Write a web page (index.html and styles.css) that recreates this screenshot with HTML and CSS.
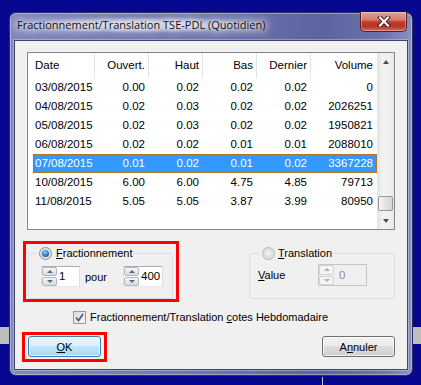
FILE: index.html
```html
<!DOCTYPE html>
<html lang="fr">
<head>
	<meta charset="utf-8" />
	<title>Fractionnement/Translation</title>
	<link rel="stylesheet" href="styles.css">
</head>
<body>
	<div class="desk desk-left"></div>
	<div class="desk desk-right"></div>
	<div class="desk desk-line"></div>

	<div class="window">
		<div class="titlebar">
			<span class="title">Fractionnement/Translation TSE-PDL (Quotidien)</span>
			<button class="close" aria-label="Fermer">
				<svg width="14" height="11" viewBox="0 0 14 11">
					<path d="M3 1.5 L11 9.5 M11 1.5 L3 9.5" stroke="#3a1a1a" stroke-width="4" stroke-linecap="square" />
					<path d="M3 1.5 L11 9.5 M11 1.5 L3 9.5" stroke="#fff" stroke-width="2.2" stroke-linecap="square" />
				</svg>
			</button>
		</div>

		<div class="client">
			<div class="list">
				<div class="list-body">
					<div class="head">
						<span class="left">Date</span>
						<span>Ouvert.</span>
						<span>Haut</span>
						<span>Bas</span>
						<span>Dernier</span>
						<span class="last">Volume</span>
					</div>
					<div class="row"><span class="left">03/08/2015</span><span>0.00</span><span>0.02</span><span>0.02</span><span>0.02</span><span class="last">0</span></div>
					<div class="row"><span class="left">04/08/2015</span><span>0.02</span><span>0.03</span><span>0.02</span><span>0.02</span><span class="last">2026251</span></div>
					<div class="row"><span class="left">05/08/2015</span><span>0.02</span><span>0.03</span><span>0.02</span><span>0.02</span><span class="last">1950821</span></div>
					<div class="row"><span class="left">06/08/2015</span><span>0.02</span><span>0.02</span><span>0.01</span><span>0.01</span><span class="last">2088010</span></div>
					<div class="row selected"><span class="left">07/08/2015</span><span>0.01</span><span>0.02</span><span>0.01</span><span>0.02</span><span class="last">3367228</span></div>
					<div class="row"><span class="left">10/08/2015</span><span>6.00</span><span>6.00</span><span>4.75</span><span>4.85</span><span class="last">79713</span></div>
					<div class="row"><span class="left">11/08/2015</span><span>5.05</span><span>5.05</span><span>3.87</span><span>3.99</span><span class="last">80950</span></div>
				</div>
				<div class="vscroll">
					<div class="arrow-btn"><i class="tri up"></i></div>
					<div class="track"><div class="thumb"></div></div>
					<div class="arrow-btn"><i class="tri down"></i></div>
				</div>
			</div>

			<div class="options">
				<div class="focusbox">
					<fieldset class="group frac">
						<legend><span class="radio on"></span><span><u>F</u>ractionnement</span></legend>
						<div class="fields">
							<div class="spin">
								<span class="spin-btns"><i class="sb"><i class="tri up"></i></i><i class="sb"><i class="tri down"></i></i></span>
								<span class="spin-val">1</span>
							</div>
							<span class="pour">pour</span>
							<div class="spin">
								<span class="spin-btns"><i class="sb"><i class="tri up"></i></i><i class="sb"><i class="tri down"></i></i></span>
								<span class="spin-val">400</span>
							</div>
						</div>
					</fieldset>
				</div>

				<fieldset class="group trans">
					<legend><span class="radio"></span><span><u>T</u>ranslation</span></legend>
					<div class="fields">
						<span class="value-label"><u>V</u>alue</span>
						<div class="spin disabled">
							<span class="spin-btns"><i class="sb"><i class="tri up"></i></i><i class="sb"><i class="tri down"></i></i></span>
							<span class="spin-val">0</span>
						</div>
					</div>
				</fieldset>
			</div>

			<label class="check-row">
				<span class="checkbox">
					<svg width="9" height="9" viewBox="0 0 9 9"><path d="M1 4.5 L3.5 7.5 L8 1" fill="none" stroke="#4a5e98" stroke-width="1.8" /></svg>
				</span>
				<span>Fractionnement/Translation <u>c</u>otes Hebdomadaire</span>
			</label>

			<div class="buttons">
				<div class="focusbox ok-box">
					<button class="btn default"><u>O</u>K</button>
				</div>
				<button class="btn">A<u>n</u>nuler</button>
			</div>
		</div>
	</div>
</body>
</html>
```

FILE: styles.css
```css
html, body { margin: 0; height: 100%; }
body {
	background: #07078f;
	font-family: "Liberation Sans", Arial, sans-serif;
	font-size: 11px;
	color: #000;
	overflow: hidden;
	position: relative;
}

/* bits of the desktop behind the dialog */
.desk { position: absolute; }
.desk-left { left: 0; top: 327px; width: 9px; height: 17px; background: #bdbdbd; }
.desk-right { left: 413px; top: 327px; width: 8px; height: 17px; background: #bdbdbd; }
.desk-line { left: 322px; top: 377px; width: 1px; height: 8px; background: #c8c8d8; }

/* window frame */
.window {
	width: 404px;
	height: 364px;
	margin: 12px 0 0 9px;
	box-sizing: border-box;
	padding: 0 4px 5px;
	border: 1px solid #2c3060;
	border-radius: 7px;
	background: linear-gradient(to right, #8088bc 0%, #7077b0 45%, #5d639f 78%, #6c72aa 92%, #8a90c0 100%);
	box-shadow: inset 0 0 0 1px rgba(255, 255, 255, 0.35);
	display: flex;
	flex-direction: column;
}
.titlebar {
	height: 27px;
	display: flex;
	align-items: flex-start;
}
.title {
	font-family: "Open Sans", "Noto Sans", sans-serif;
	font-size: 11px;
	line-height: 16px;
	margin: 4px 0 0 3px;
	padding: 0 4px 0 0;
	color: #111;
	background: radial-gradient(ellipse at 50% 50%, rgba(255, 255, 255, 0.55) 30%, rgba(255, 255, 255, 0) 72%);
	text-shadow: 0 0 6px #fff, 0 0 8px #fff, 0 0 12px #fff, 0 0 14px #fff;
}
.close {
	margin: -1px 1px 0 auto;
	width: 47px;
	height: 20px;
	padding: 0;
	border: 1px solid #5a2222;
	border-top: 0;
	border-radius: 0 0 5px 5px;
	background: linear-gradient(#e2a397 0%, #d47a6c 42%, #c03d2d 52%, #b93325 75%, #d0705e 100%);
	box-shadow: inset 0 0 0 1px rgba(255, 255, 255, 0.3);
	display: flex;
	align-items: center;
	justify-content: center;
}
.client {
	flex: 1;
	box-sizing: border-box;
	border: 1px solid #3e4474;
	box-shadow: 0 0 0 1px rgba(255, 255, 255, 0.3);
	background: #f0f0f0;
	display: flex;
	flex-direction: column;
}

/* list view */
.list {
	margin: 11px 12px 0;
	height: 178px;
	box-sizing: border-box;
	border: 1px solid #828790;
	background: #fff;
	display: flex;
	font-size: 11.5px;
}
.list-body { width: 349px; }
.head, .row { display: grid; }
.head {
	grid-template-columns: 67px 54px 54px 54px 54px 66px;
	height: 25px;
	line-height: 24px;
}
.head span {
	border-right: 1px solid #e3e3e3;
	text-align: right;
	padding-right: 3px;
}
.head span.left { text-align: left; padding-left: 7px; }
.head span.last { border-right: 0; padding-right: 4px; }
.row {
	grid-template-columns: 62px 54px 54px 54px 54px 66px;
	margin-left: 5px;
	height: 19px;
	line-height: 19px;
}
.row span { text-align: right; padding-right: 4px; }
.row span.left { text-align: left; padding-left: 2px; }
.row span.last { padding-right: 4px; }
.row.selected {
	background: #3399ff;
	color: #fff;
	outline: 1px dotted #b06a10;
	outline-offset: -1px;
}

.vscroll {
	width: 17px;
	display: flex;
	flex-direction: column;
	background: linear-gradient(to right, #e3e3e3, #f3f3f3 35%, #f0f0f0 70%, #e8e8e8);
}
.arrow-btn {
	height: 17px;
	display: flex;
	align-items: center;
	justify-content: center;
}
.track {
	flex: 1;
	display: flex;
	flex-direction: column;
	justify-content: flex-end;
	padding-bottom: 1px;
}
.thumb {
	height: 15px;
	margin: 0 1px;
	box-sizing: border-box;
	border: 1px solid #979797;
	border-radius: 2px;
	background: linear-gradient(to right, #f6f6f6, #e4e4e4 50%, #d6d6d6);
}
.tri {
	display: block;
	width: 0;
	height: 0;
	border-left: 3.5px solid transparent;
	border-right: 3.5px solid transparent;
}
.tri.up { border-bottom: 4px solid #4d4d4d; }
.tri.down { border-top: 4px solid #4d4d4d; }

/* group boxes */
.options {
	display: flex;
	justify-content: space-between;
	align-items: flex-start;
	margin: 11px 12px 0 8px;
}
.focusbox {
	border: 3px solid #ff0000;
}
.options .focusbox { width: 156px; height: 61px; box-sizing: border-box; }
.group {
	margin: 0;
	box-sizing: border-box;
	border: 1px solid #d5dfe5;
	border-radius: 3px;
}
.group legend {
	display: flex;
	align-items: center;
	line-height: 16px;
	height: 16px;
	padding: 0 2px;
}
.frac { width: 145px; height: 54px; margin: 1px 0 0 2px; padding: 0 8px 0 12px; }
.frac legend { margin-left: -4px; }
.trans { width: 146px; height: 54px; margin-top: 4px; padding: 0 8px 0 8px; }
.trans legend { margin-left: 2px; }
.fields {
	display: flex;
	align-items: center;
	margin-top: 5px;
}
.trans .fields { margin-top: 3px; }

.radio {
	width: 13px;
	height: 13px;
	box-sizing: border-box;
	border-radius: 50%;
	border: 1px solid #8e8f8f;
	background: radial-gradient(circle at 50% 50%, #f2f2f2 0, #dcdcdc 60%, #f7f7f7 100%);
	margin-right: 4px;
	display: inline-flex;
	align-items: center;
	justify-content: center;
}
.trans .radio { margin-right: 3px; border-color: #b5b5b5; }
.radio.on::after {
	content: "";
	width: 7px;
	height: 7px;
	border-radius: 50%;
	background: radial-gradient(circle at 45% 35%, #9fdcff 0, #2a8ad6 45%, #0c3f80 100%);
}

.spin {
	display: flex;
	width: 39px;
	height: 21px;
	box-sizing: border-box;
	border: 1px solid #abadb3;
	border-color: #abadb3 #dbdfe6 #e3e9ef #e2e3ea;
	background: #fff;
	font-size: 11.5px;
}
.spin-btns {
	width: 15px;
	display: flex;
	flex-direction: column;
	gap: 1px;
	padding: 0 1px 0 0;
}
.sb {
	flex: 1;
	border: 1px solid #b3b7bd;
	border-radius: 2px;
	background: linear-gradient(#f6f6f6, #dadada);
	display: flex;
	align-items: center;
	justify-content: center;
}
.sb .tri { border-left-width: 3px; border-right-width: 3px; }
.sb .tri.up { border-bottom: 3px solid #56698f; }
.sb .tri.down { border-top: 3px solid #56698f; }
.spin-val { line-height: 19px; padding-left: 1px; }
.pour { margin: 0 16px 0 5px; }
.frac .spin + .pour + .spin { width: 40px; }

.value-label { width: 60px; }
.spin.disabled { width: 49px; height: 22px; background: #f0f0f0; border-color: #c4c6c9; color: #8d8d8d; }
.spin.disabled .sb { border-color: #d0d2d5; background: #f4f4f4; }
.spin.disabled .tri.up { border-bottom-color: #b0b0b0; }
.spin.disabled .tri.down { border-top-color: #b0b0b0; }
.spin.disabled .spin-val { padding-left: 4px; line-height: 20px; }

/* checkbox */
.check-row {
	display: flex;
	align-items: center;
	margin: 8px 0 0 58px;
	height: 14px;
}
.checkbox {
	width: 13px;
	height: 13px;
	box-sizing: border-box;
	border: 1px solid #9a9a9a;
	background: linear-gradient(135deg, #dcdcdc, #f6f6f6);
	margin-right: 4px;
	display: inline-flex;
	align-items: center;
	justify-content: center;
}

/* buttons */
.buttons {
	display: flex;
	justify-content: space-between;
	align-items: flex-start;
	margin: 8px 12px 0 7px;
}
.ok-box { padding: 1px 3px 2px; }
.btn {
	width: 73px;
	height: 21px;
	padding: 0;
	font-family: "Liberation Sans", Arial, sans-serif;
	font-size: 11px;
	color: #000;
	border: 1px solid #707070;
	border-radius: 3px;
	background: linear-gradient(#f2f2f2 0%, #ebebeb 49%, #dddddd 50%, #cfcfcf 100%);
	box-shadow: inset 0 0 0 1px rgba(255, 255, 255, 0.7);
}
.buttons > .btn { margin-top: 4px; }
.btn.default {
	border-color: #3c7fb1;
	background: linear-gradient(#eaf6fd 0%, #d9f0fc 49%, #bee6fd 50%, #a7d9f5 100%);
}
```
